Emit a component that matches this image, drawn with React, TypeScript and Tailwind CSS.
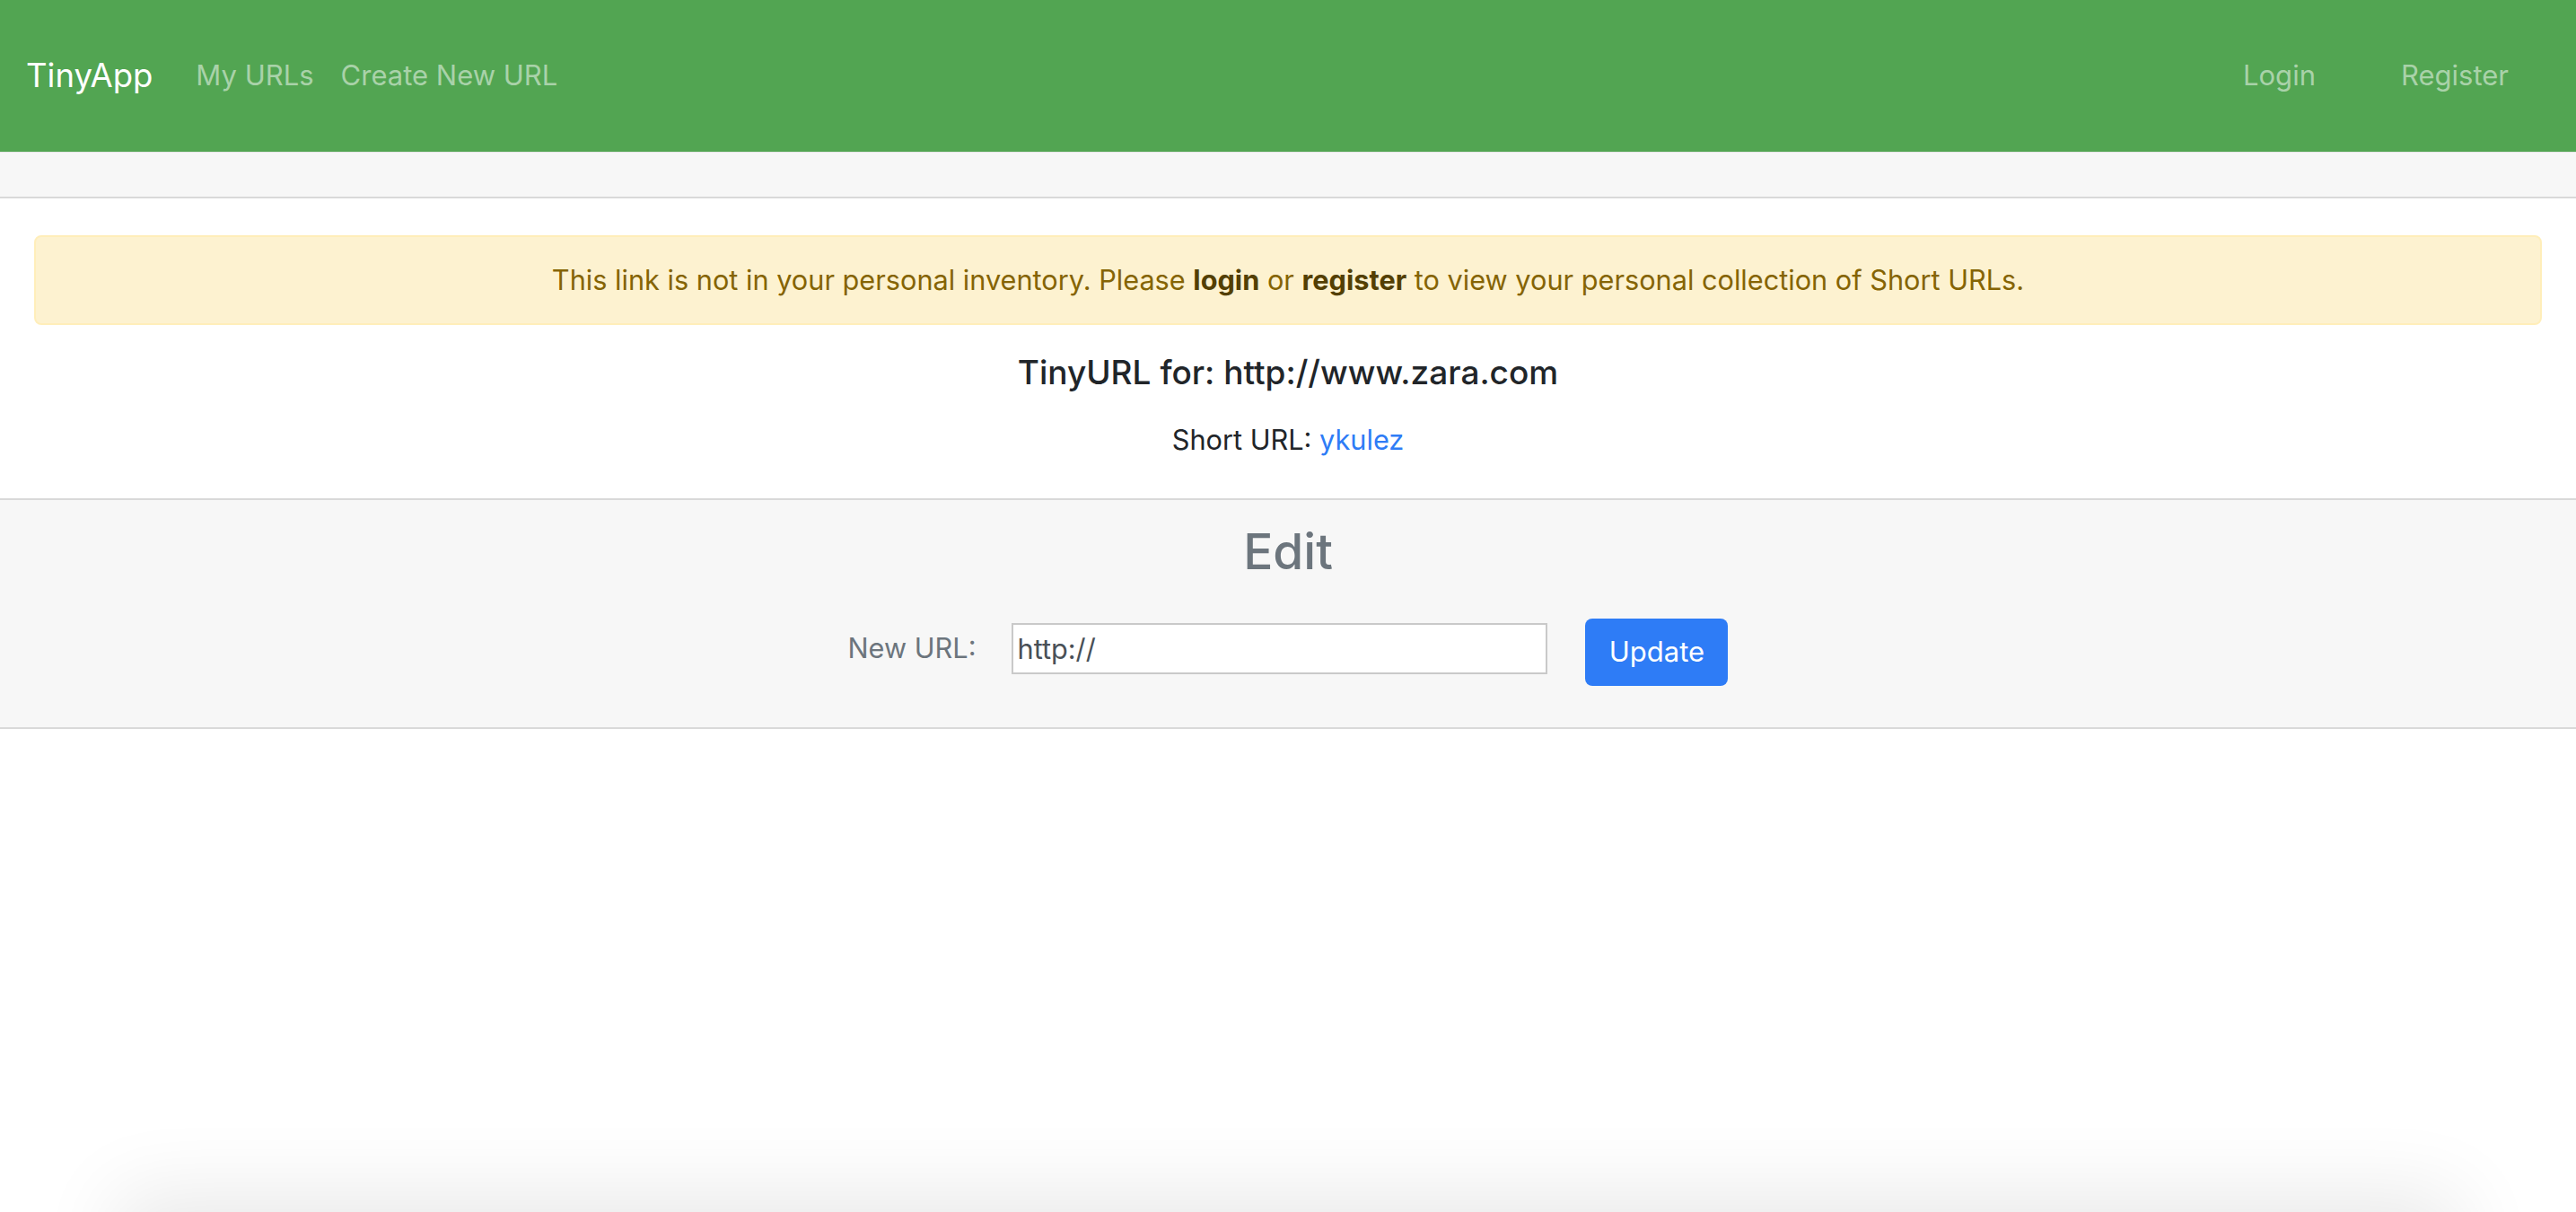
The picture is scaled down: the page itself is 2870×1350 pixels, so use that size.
export default function App() {
  return (
    <div className="bg-white font-['Inter',sans-serif] text-[30.7px] text-[#212529]">
      <div className="h-[1350px]">
        <nav className="flex h-[169px] items-center bg-[#52a552] pl-[29px] pr-[75px] text-[31px]">
          <a className="mr-[48px] text-[36.5px] text-white">TinyApp</a>
          <a className="mr-[30px] text-[#a9d2a9]">My URLs</a>
          <a className="text-[#a9d2a9]">Create New URL</a>
          <div className="ml-auto flex gap-[95px]">
            <a className="text-[#a9d2a9]">Login</a>
            <a className="text-[#a9d2a9]">Register</a>
          </div>
        </nav>
        <div className="h-[52px] border-t border-b-2 border-t-[#e6e6e6] border-b-[#d9d9d9] bg-[#f7f7f7]" />

        <div className="px-[38px] pt-[41px]">
          <div className="flex h-[100px] items-center justify-center rounded-[8px] border-2 border-[#ffeeba] bg-[#fdf2d0] text-[#856404]">
            <p>
              This link is not in your personal inventory. Please{" "}
              <b className="font-bold text-[#533f03]">login</b> or{" "}
              <b className="font-bold text-[#533f03]">register</b> to view your personal collection of
              Short URLs.
            </p>
          </div>
        </div>

        <div className="flex flex-col items-center pt-[28px]">
          <h4 className="text-[37px] font-medium leading-[50px]">TinyURL for: http://www.zara.com</h4>
          <p className="mt-[28px] leading-[44px]">
            Short URL: <a className="text-[#2e7cf6]">ykulez</a>
          </p>
        </div>

        <section className="mt-[43px] flex h-[257px] flex-col items-center border-y-2 border-[#d9d9d9] bg-[#f7f7f7]">
          <h2 className="mt-[24px] text-[55px] font-medium leading-[66px] text-[#6c757d]">Edit</h2>
          <form className="mt-[34px] flex items-center">
            <label className="mr-[40px] text-[#6c757d]">New URL:</label>
            <input
              className="h-[57px] w-[597px] border-2 border-[#c9c9c9] bg-white px-[4px] text-[#495057] outline-none"
              defaultValue="http://"
            />
            <button
              type="button"
              className="ml-[42px] mt-[8px] h-[75px] w-[159px] rounded-[8px] bg-[#2e7cf6] text-[31px] text-white"
            >
              Update
            </button>
          </form>
        </section>
      </div>
      <footer className="mx-[150px] h-[200px] bg-white shadow-[0_0_90px_20px_rgba(0,0,0,0.09)]" />
    </div>
  );
}
